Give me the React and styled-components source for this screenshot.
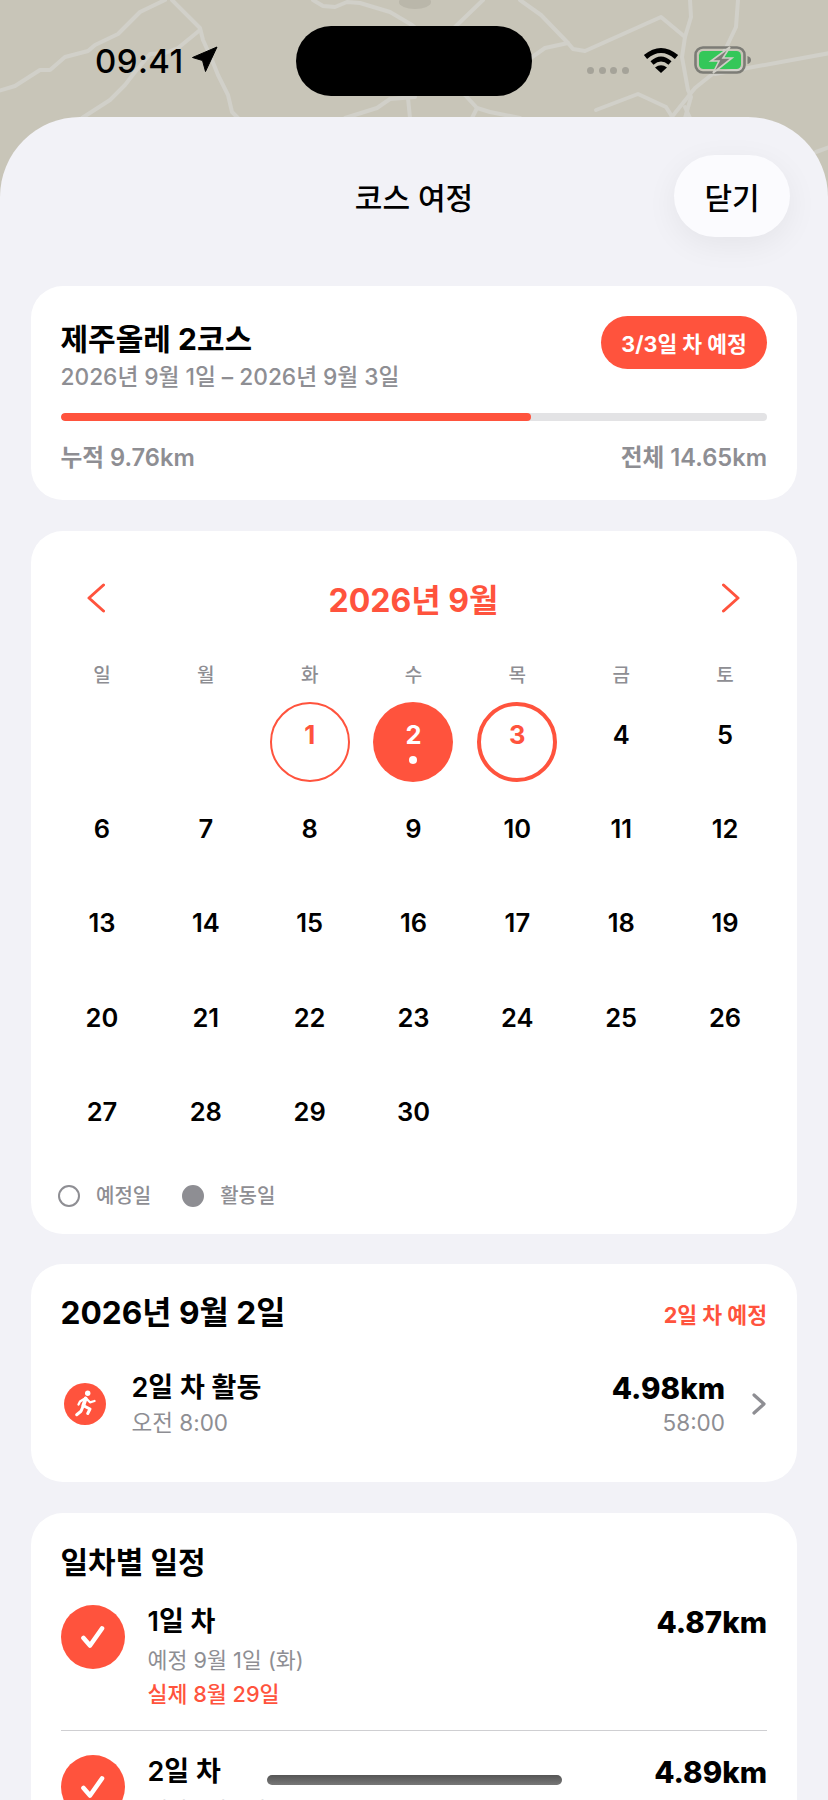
import styled, { createGlobalStyle } from "styled-components";

const ACCENT = "#ff533d";
const GRAY = "#8e8e93";

const days = [
  null, null, 1, 2, 3, 4, 5,
  6, 7, 8, 9, 10, 11, 12,
  13, 14, 15, 16, 17, 18, 19,
  20, 21, 22, 23, 24, 25, 26,
  27, 28, 29, 30,
];

const roads = [
  "M-5 92 L15 86 L40 70 L50 70 L65 57 L88 51 L95 45 L118 34 L130 22 L140 12 L165 0",
  "M172 0 L200 28 L203 40 L212 60 L218 75 L228 95 L232 112 L238 118",
  "M200 30 L178 48 L165 53 L150 54 L135 72 L125 85 L110 100 L82 118",
  "M313 0 L323 6 L335 7 L347 2 L360 3 L390 12 L412 25 L430 40",
  "M483 0 L457 25 L440 42",
  "M345 118 L377 108 L390 99 L415 97",
  "M408 98 L410 118",
  "M445 85 L465 95 L477 108 L490 112 L520 118",
  "M477 108 L472 118",
  "M520 0 L541 15 L568 43 L573 49 L585 51 L661 17 L685 37",
  "M568 43 L545 48 L525 62",
  "M690 0 L691 17 L685 37 L682 57 L688 90 L691 97 L685 118",
  "M738 0 L736 27 L725 50 L715 72 L695 88 L671 118",
  "M715 74 L830 53",
  "M596 110 L638 94 L666 107 L671 115",
  "M685 107 L690 118",
  "M816 152 L830 147",
];

function MapRoads() {
  return (
    <MapBackdrop viewBox="0 0 828 240" aria-hidden="true">
      <ellipse cx="415" cy="2" rx="16" ry="7" fill="#b3b0a4" opacity="0.7" />
      {roads.map((d) => (
        <path key={d} d={d} fill="none" stroke="#d1d0c9" strokeWidth="4" strokeLinejoin="round" strokeLinecap="round" />
      ))}
    </MapBackdrop>
  );
}

function StatusIcons() {
  return (
    <StatusRight>
      <SignalDots>
        <i /><i /><i /><i />
      </SignalDots>
      <svg width="36" height="26" viewBox="0 0 36 26">
        <path d="M2.5 10 Q18 -3 33.5 10" fill="none" stroke="#000" strokeWidth="5" />
        <path d="M9 16 Q18 8 27 16" fill="none" stroke="#000" strokeWidth="4.6" />
        <path d="M18 26 L12 20.5 Q18 16 24 20.5 Z" fill="#000" />
      </svg>
      <svg width="58" height="28" viewBox="0 0 58 28">
        <rect x="1.5" y="1.5" width="49" height="25" rx="7.5" fill="none" stroke="#7c7c76" strokeWidth="2.6" />
        <rect x="5" y="5" width="42" height="18" rx="4.5" fill="#34c759" />
        <path d="M53.5 10 Q57 11 57 14 Q57 17 53.5 18 Z" fill="#7c7c76" />
        <path d="M36 1 L17 15 H25 L19 27 L38 12 H29 Z" fill="#7c7c76" stroke="#cfcec6" strokeWidth="1.6" />
      </svg>
    </StatusRight>
  );
}

function MonthChevron({ flip }) {
  return (
    <svg width="18" height="30" viewBox="0 0 18 30" style={{ transform: flip ? "scaleX(-1)" : undefined }}>
      <path d="M16.5 2 L2 15 L16.5 28" fill="none" stroke={ACCENT} strokeWidth="3" strokeLinecap="round" strokeLinejoin="round" />
    </svg>
  );
}

function RunIcon() {
  return (
    <svg width="42" height="42" viewBox="0 0 42 42">
      <circle cx="21" cy="21" r="21" fill={ACCENT} />
      <circle cx="23.7" cy="10.3" r="2.7" fill="#fff" />
      <g fill="none" stroke="#fff" strokeWidth="3" strokeLinecap="round" strokeLinejoin="round">
        <path d="M21.7 15.5 L19.3 22.7" strokeWidth="3.8" />
        <path d="M21.7 15 L16 18.5 L14.5 21.5" strokeWidth="2.3" />
        <path d="M21.7 15 L26 19.3 L30.5 18" strokeWidth="2.3" />
        <path d="M19.3 22.7 L26 26 L23.7 30.5" />
        <path d="M19.3 22.7 L17 28.3 L12.7 31.7" />
      </g>
    </svg>
  );
}

function CheckBadge() {
  return (
    <CheckCircle>
      <svg width="24" height="22" viewBox="0 0 24 22">
        <path d="M2.5 12 L9 19.5 L21 2.5" fill="none" stroke="#fff" strokeWidth="4.6" strokeLinecap="round" strokeLinejoin="round" />
      </svg>
    </CheckCircle>
  );
}

function DayRow({ title, km, planned, actual }) {
  return (
    <PlanRow>
      <CheckBadge />
      <PlanText>
        <RowTitle>{title}</RowTitle>
        <PlanDate>{planned}</PlanDate>
        {actual && <ActualDate>{actual}</ActualDate>}
      </PlanText>
      <RowKm>{km}</RowKm>
    </PlanRow>
  );
}

export default function App() {
  return (
    <Page>
      <GlobalStyle />
      <MapRoads />
      <StatusBar>
        <TimeGroup>
          09:41
          <svg width="26" height="26" viewBox="0 0 26 26">
            <path d="M25 1 L0.5 11.5 L10.5 14.5 L13.5 25.5 Z" fill="#000" stroke="#000" strokeWidth="1" strokeLinejoin="round" />
          </svg>
        </TimeGroup>
        <Island />
        <StatusIcons />
      </StatusBar>

      <Sheet>
        <SheetHeader>
          <SheetTitle>코스 여정</SheetTitle>
          <CloseButton>닫기</CloseButton>
        </SheetHeader>

        <Cards>
          <SummaryCard>
            <SummaryTop>
              <div>
                <CourseName>제주올레 2코스</CourseName>
                <CourseDates>2026년 9월 1일 – 2026년 9월 3일</CourseDates>
              </div>
              <DayBadge>3/3일 차 예정</DayBadge>
            </SummaryTop>
            <ProgressTrack>
              <ProgressFill style={{ width: "66.6%" }} />
            </ProgressTrack>
            <SummaryFoot>
              <span>누적 9.76km</span>
              <span>전체 14.65km</span>
            </SummaryFoot>
          </SummaryCard>

          <CalendarCard>
            <MonthBar>
              <MonthChevron />
              <MonthTitle>2026년 9월</MonthTitle>
              <MonthChevron flip />
            </MonthBar>
            <WeekRow>
              {["일", "월", "화", "수", "목", "금", "토"].map((d) => (
                <span key={d}>{d}</span>
              ))}
            </WeekRow>
            <DayGrid>
              {days.map((d, i) => (
                <DayCell key={i}>
                  {d && (
                    <DayCircle $kind={d === 1 ? "first" : d === 2 ? "active" : d === 3 ? "last" : "plain"}>
                      <DayNumber>{d}</DayNumber>
                      <DaySlot>{d === 2 && <ActiveDot />}</DaySlot>
                    </DayCircle>
                  )}
                </DayCell>
              ))}
            </DayGrid>
            <Legend>
              <LegendMark />
              <span>예정일</span>
              <LegendMark $filled />
              <span>활동일</span>
            </Legend>
          </CalendarCard>

          <ActivityCard>
            <CardHead>
              <DateHeading>2026년 9월 2일</DateHeading>
              <PlanTag>2일 차 예정</PlanTag>
            </CardHead>
            <ActivityRow>
              <RunIcon />
              <ActivityText>
                <RowTitle>2일 차 활동</RowTitle>
                <ActivityMeta>오전 8:00</ActivityMeta>
              </ActivityText>
              <ActivityStats>
                <RowKm>4.98km</RowKm>
                <ActivityMeta>58:00</ActivityMeta>
              </ActivityStats>
              <svg width="16" height="22" viewBox="0 0 16 22">
                <path d="M3 2 L13 11 L3 20" fill="none" stroke={GRAY} strokeWidth="3.2" strokeLinecap="round" strokeLinejoin="round" />
              </svg>
            </ActivityRow>
          </ActivityCard>

          <PlanCard>
            <CardHeading>일차별 일정</CardHeading>
            <PlanList>
              <DayRow title="1일 차" km="4.87km" planned="예정 9월 1일 (화)" actual="실제 8월 29일" />
              <PlanDivider />
              <DayRow title="2일 차" km="4.89km" planned="예정 9월 2일 (수)" />
            </PlanList>
          </PlanCard>
        </Cards>
      </Sheet>
      <HomeIndicator />
    </Page>
  );
}

const GlobalStyle = createGlobalStyle`
  html, body {
    margin: 0;
    padding: 0;
    background: #f2f2f7;
  }
  body {
    font-family: "Inter", "Noto Sans CJK KR", sans-serif;
    color: #000;
  }
  * {
    box-sizing: border-box;
  }
`;

const Page = styled.div`
  position: relative;
  width: 828px;
  height: 1800px;
  overflow: hidden;
  background: #c8c5b8;
`;

const MapBackdrop = styled.svg`
  position: absolute;
  top: 0;
  left: 0;
  width: 828px;
  height: 240px;
`;

const StatusBar = styled.div`
  position: relative;
  display: grid;
  grid-template-columns: 296px 236px 1fr;
  height: 117px;
  padding-top: 26px;
`;

const TimeGroup = styled.div`
  display: flex;
  align-items: center;
  gap: 8px;
  height: 70px;
  padding-left: 95px;
  font-size: 33px;
  font-weight: 500;
  letter-spacing: 0.4px;

  svg {
    margin-top: -4px;
  }
`;

const Island = styled.div`
  width: 236px;
  height: 70px;
  border-radius: 35px;
  background: #000;
`;

const StatusRight = styled.div`
  display: flex;
  align-items: center;
  height: 70px;
  padding: 0 0 0 55px;
  margin-top: -1px;

  svg:nth-of-type(1) {
    margin-left: 14px;
  }
  svg:nth-of-type(2) {
    margin-left: 15px;
  }
`;

const SignalDots = styled.div`
  display: flex;
  gap: 4.5px;
  margin-top: 20px;

  i {
    width: 7px;
    height: 7px;
    border-radius: 50%;
    background: #a5a399;
  }
`;

const Sheet = styled.div`
  position: relative;
  height: 1683px;
  padding: 0 31px;
  background: #f2f2f7;
  border-radius: 80px 80px 0 0;
`;

const SheetHeader = styled.div`
  display: grid;
  grid-template-columns: 1fr auto 1fr;
  align-items: center;
  padding: 38px 0 49px;
`;

const SheetTitle = styled.h1`
  grid-column: 2;
  margin: 0;
  font-size: 30px;
  font-weight: 500;
`;

const CloseButton = styled.button`
  grid-column: 3;
  justify-self: end;
  width: 116px;
  height: 82px;
  margin-right: 7px;
  border: none;
  border-radius: 41px;
  background: #fbfbfe;
  box-shadow: 0 8px 32px rgba(0, 0, 0, 0.06);
  font: inherit;
  font-size: 30px;
  font-weight: 500;
  color: #000;
`;

const Cards = styled.div`
  display: flex;
  flex-direction: column;
  gap: 30.5px;
`;

const Card = styled.section`
  background: #fff;
  border-radius: 32px;
`;

const SummaryCard = styled(Card)`
  height: 214px;
  padding: 30px 30px 0 29.5px;
`;

const SummaryTop = styled.div`
  display: flex;
  justify-content: space-between;
  align-items: flex-start;
`;

const CourseName = styled.div`
  font-size: 30px;
  font-weight: 700;
  line-height: 46px;
`;

const CourseDates = styled.div`
  font-size: 22.7px;
  font-weight: 500;
  line-height: 30px;
  color: ${GRAY};
`;

const DayBadge = styled.div`
  display: flex;
  align-items: center;
  justify-content: center;
  width: 166px;
  height: 53px;
  border-radius: 27px;
  background: ${ACCENT};
  color: #fff;
  font-size: 21.5px;
  font-weight: 700;
`;

const ProgressTrack = styled.div`
  height: 8px;
  margin-top: 21px;
  border-radius: 4px;
  background: #e3e3e5;
  overflow: hidden;
`;

const ProgressFill = styled.div`
  height: 100%;
  border-radius: 4px;
  background: ${ACCENT};
`;

const SummaryFoot = styled.div`
  display: flex;
  justify-content: space-between;
  margin-top: 23px;
  font-size: 23.7px;
  font-weight: 600;
  line-height: 28px;
  color: ${GRAY};
`;

const CalendarCard = styled(Card)`
  height: 703px;
  padding: 0 20px 0 19px;
`;

const MonthBar = styled.div`
  display: flex;
  align-items: center;
  justify-content: space-between;
  padding: 52px 37px 0;
  height: 82px;
`;

const MonthTitle = styled.div`
  font-size: 32px;
  font-weight: 700;
  color: ${ACCENT};
`;

const WeekRow = styled.div`
  display: grid;
  grid-template-columns: repeat(7, 1fr);
  margin-top: 50px;
  line-height: 26px;
  font-size: 19px;
  font-weight: 500;
  color: ${GRAY};
  text-align: center;
`;

const DayGrid = styled.div`
  display: grid;
  grid-template-columns: repeat(7, 1fr);
  grid-auto-rows: 94.3px;
  margin-top: 6px;
`;

const DayCell = styled.div`
  display: flex;
  align-items: center;
  justify-content: center;
`;

const DayCircle = styled.div`
  display: flex;
  flex-direction: column;
  align-items: center;
  justify-content: center;
  width: 80px;
  height: 80px;
  border-radius: 50%;
  border: ${(p) => (p.$kind === "first" ? 2 : p.$kind === "last" ? 4 : 0)}px solid ${ACCENT};
  background: ${(p) => (p.$kind === "active" ? ACCENT : "transparent")};
  color: ${(p) => (p.$kind === "plain" ? "#000" : p.$kind === "active" ? "#fff" : ACCENT)};
  font-weight: ${(p) => (p.$kind === "plain" ? 600 : 700)};
`;

const DayNumber = styled.span`
  font-size: 25.5px;
  line-height: 30px;
  margin-bottom: 6px;
`;

const DaySlot = styled.span`
  display: block;
  height: 8px;
`;

const ActiveDot = styled.i`
  display: block;
  width: 8px;
  height: 8px;
  border-radius: 50%;
  background: #fff;
`;

const Legend = styled.div`
  display: flex;
  align-items: center;
  margin-top: 15px;
  padding-left: 8px;
  font-size: 20px;
  font-weight: 500;
  line-height: 30px;
  color: ${GRAY};

  span:nth-of-type(1) {
    margin: 0 31px 0 16px;
  }
  span:nth-of-type(2) {
    margin-left: 16px;
  }
`;

const LegendMark = styled.i`
  width: 22px;
  height: 22px;
  border-radius: 50%;
  border: 2.5px solid ${GRAY};
  background: ${(p) => (p.$filled ? GRAY : "transparent")};
`;

const ActivityCard = styled(Card)`
  height: 218px;
  padding: 28px 30px 0 29.5px;
`;

const CardHead = styled.div`
  display: flex;
  justify-content: space-between;
  align-items: center;
`;

const CardHeading = styled.h2`
  margin: 0;
  font-size: 30px;
  font-weight: 700;
  line-height: 42px;
`;

const DateHeading = styled(CardHeading)`
  font-size: 31.7px;
`;

const PlanTag = styled.span`
  font-size: 21.6px;
  font-weight: 700;
  color: ${ACCENT};
`;

const ActivityRow = styled.div`
  display: flex;
  align-items: center;
  margin-top: 33px;
  padding-left: 3px;

  > svg:last-child {
    margin-left: 26px;
  }
`;

const ActivityText = styled.div`
  flex: 1;
  margin-left: 26px;
  padding-top: 4px;
`;

const ActivityStats = styled.div`
  padding-top: 4px;
  text-align: right;
`;

const RowTitle = styled.div`
  font-size: 27px;
  font-weight: 600;
  line-height: 34px;
`;

const RowKm = styled.div`
  font-size: 29.5px;
  font-weight: 800;
  line-height: 34px;
`;

const ActivityMeta = styled.div`
  margin-top: 1px;
  font-size: 22.5px;
  font-weight: 400;
  line-height: 34px;
  color: ${GRAY};
`;

const PlanCard = styled(Card)`
  height: 400px;
  padding: 28px 30px 0 29.5px;
`;

const PlanList = styled.div`
  margin-top: 22px;
`;

const PlanRow = styled.div`
  display: flex;
  align-items: flex-start;
`;

const CheckCircle = styled.div`
  display: flex;
  align-items: center;
  justify-content: center;
  flex: none;
  width: 64px;
  height: 64px;
  border-radius: 50%;
  background: ${ACCENT};
`;

const PlanText = styled.div`
  flex: 1;
  margin-left: 23px;
`;

const PlanDate = styled.div`
  margin-top: 5px;
  font-size: 21.7px;
  font-weight: 400;
  line-height: 32px;
  color: ${GRAY};
`;

const ActualDate = styled.div`
  margin-top: 2px;
  font-size: 21.7px;
  font-weight: 500;
  line-height: 32px;
  color: ${ACCENT};
`;

const PlanDivider = styled.div`
  height: 1px;
  margin: 20px 0 24px;
  background: #cfcfd2;
`;

const HomeIndicator = styled.div`
  position: absolute;
  left: 267px;
  top: 1775px;
  width: 295px;
  height: 10px;
  border-radius: 5px;
  background: linear-gradient(#555, #777);
`;
